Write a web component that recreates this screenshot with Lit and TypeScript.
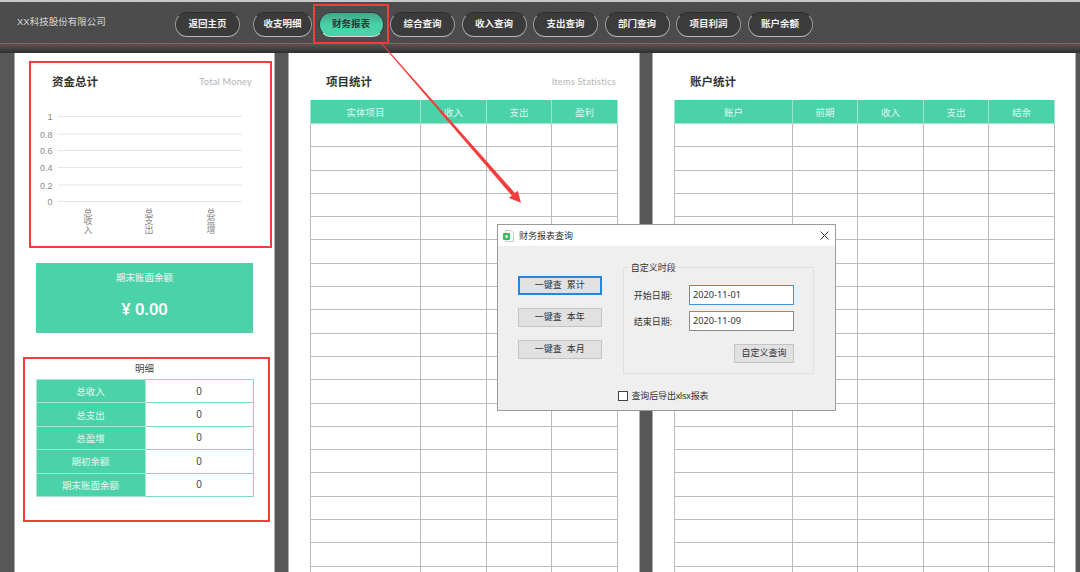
import { LitElement, html, css, svg } from "lit";
import { customElement } from "lit/decorators.js";

const NAV = ["返回主页", "收支明细", "财务报表", "综合查询", "收入查询", "支出查询", "部门查询", "项目利润", "账户余额"];
const DETAIL = ["总收入", "总支出", "总盈增", "期初余额", "期末账面余额"];
const ROWS = Array.from({ length: 20 });

@customElement("app-root")
export class AppRoot extends LitElement {
  static styles = css`
    :host {
      display: block;
      position: relative;
      width: 1080px;
      height: 572px;
      overflow: hidden;
      background: #575757;
      font-family: "Liberation Sans", "Noto Sans CJK SC", sans-serif;
      font-size: 10px;
      color: #333;
    }
    .top {
      box-sizing: border-box;
      height: 44px;
      display: flex;
      align-items: flex-start;
      border-top: 2px solid #c9c9c9;
      border-bottom: 1px solid #3f8f4c;
      background-color: #484848;
      background-image: linear-gradient(45deg, #505050 25%, #434343 25%, #434343 50%, #505050 50%, #505050 75%, #434343 75%);
      background-size: 3px 3px;
    }
    .brand {
      width: 175px;
      box-sizing: border-box;
      padding: 13px 0 0 17px;
      color: #d6d6d6;
      font-size: 9.5px;
      line-height: 14px;
    }
    nav {
      display: flex;
      gap: 6.5px;
      padding-top: 10px;
    }
    .btn {
      box-sizing: border-box;
      width: 65px;
      height: 24.5px;
      border-radius: 12.25px;
      border: 1px solid #2e2e2e;
      border-bottom-color: #b8b8b8;
      border-left-color: #9a9a9a;
      border-right-color: #9a9a9a;
      background: #3b3b3b;
      color: #f0f0f0;
      font-size: 9.5px;
      font-weight: 700;
      line-height: 22.5px;
      text-align: center;
    }
    .btn.first { margin-right: 6.5px; }
    .btn.narrow { width: 59px; }
    .btn.on {
      background: linear-gradient(#3fa888, #4bd2a8 55%);
      border-color: #3a3a3a;
      border-bottom-color: #d8d8d8;
      color: #333;
    }
    .strip {
      height: 9px;
      background: linear-gradient(#565656, #2f2f2f);
    }
    .main {
      display: flex;
      padding-left: 15px;
      height: 519px;
    }
    .panel {
      position: relative;
      box-sizing: border-box;
      background: #fff;
      height: 100%;
      overflow: hidden;
      box-shadow: -1px 0 0 #aaa, 1px 0 0 #b0b0b0;
    }
    .p1 { width: 259px; margin-right: 15px; }
    .p2 { width: 350px; margin-right: 14px; padding: 20px 21px 0; }
    .p3 { width: 422px; padding: 20px 21px 0; }
    .head {
      display: flex;
      justify-content: space-between;
      align-items: center;
      height: 17px;
      margin-bottom: 10px;
    }
    .head b {
      font-size: 11.5px;
      font-weight: 700;
      color: #333;
      padding-left: 16px;
      padding-bottom: 2px;
    }
    .head span {
      font-family: "Lato", "Noto Sans", sans-serif;
      font-size: 9.2px;
      letter-spacing: 0.25px;
      color: #b4b4b4;
      padding-right: 2px;
    }
    .p1 .sec { padding: 20px 22px 0 37px; }
    .p1 .head { margin-bottom: 0; }
    .p1 .head b { padding-left: 0; }
    .p1 .head span { padding-right: 0; }
    .chart { display: block; width: 259px; height: 134px; margin-left: -37px; margin-top: 10px; }
    .chart text { font-size: 9px; fill: #8a8a8a; font-family: "Liberation Sans", "Noto Sans CJK SC", sans-serif; }
    .chart text.cat { font-size: 9px; }
    .card {
      box-sizing: border-box;
      margin: 29px 21px 0;
      height: 70px;
      background: #4bd2a8;
      color: #ecfbf6;
      text-align: center;
      padding-top: 8px;
      font-size: 9.5px;
      line-height: 14px;
    }
    .card strong {
      display: block;
      margin-top: 11px;
      font-family: "Noto Sans", "Noto Sans CJK SC", sans-serif;
      font-size: 16.5px;
      font-weight: 600;
      line-height: 26px;
      color: #fff;
    }
    .dt {
      margin-top: 27px;
      text-align: center;
      font-size: 9.5px;
      line-height: 18px;
      color: #444;
    }
    .detail {
      margin: 1px 21px 0 20.5px;
      width: 218px;
      border-collapse: collapse;
      table-layout: fixed;
    }
    .detail th {
      width: 109px;
      height: 23.4px;
      padding: 0;
      box-sizing: border-box;
      background: #4bd2a8;
      color: #e4f9f1;
      font-weight: 400;
      font-size: 9.5px;
      border: 1px solid #a8e8d2;
    }
    .detail td {
      padding: 0;
      box-sizing: border-box;
      text-align: center;
      font-size: 10px;
      color: #444;
      border: 1px solid #80dcbe;
    }
    .grid {
      border-collapse: collapse;
      table-layout: fixed;
      box-sizing: border-box;
    }
    .grid th {
      height: 23.5px;
      padding: 0;
      box-sizing: border-box;
      background: #4bd2a8;
      color: #dff7ee;
      font-size: 9.5px;
      font-weight: 400;
      border: 1px solid #9ce5cd;
      border-top: none;
    }
    .grid td {
      height: 23.3px;
      padding: 0;
      box-sizing: border-box;
      border: 1px solid #bcbcbc;
    }
    .g2 { width: 307px; }
    .g3 { width: 380px; }
    .note {
      position: absolute;
      box-sizing: border-box;
      border: 2px solid #f43c3c;
      pointer-events: none;
    }
    .n1 { left: 313px; top: 4px; width: 76px; height: 40px; }
    .n2 { left: 29px; top: 61px; width: 243px; height: 187px; }
    .n3 { left: 23px; top: 357px; width: 247px; height: 165px; }
    .arrow { position: absolute; left: 0; top: 0; width: 1080px; height: 572px; pointer-events: none; }
    .dlg {
      position: absolute;
      left: 497px;
      top: 224px;
      box-sizing: border-box;
      width: 339px;
      height: 187px;
      border: 1px solid #9a9a9a;
      background: #efefef;
      color: #333;
      font-size: 9px;
    }
    .bar {
      display: flex;
      align-items: center;
      height: 21px;
      padding: 0 6px 0 5px;
      background: #fff;
      gap: 5px;
    }
    .bar span { flex: 1; }
    .body {
      display: flex;
      padding: 21px 21px 0 20px;
      height: 122px;
      box-sizing: content-box;
    }
    .quick {
      display: flex;
      flex-direction: column;
      gap: 13px;
      width: 84px;
      padding-top: 9px;
      margin-right: 21px;
    }
    .wbtn {
      box-sizing: border-box;
      height: 19px;
      border: 1px solid #c4c4c4;
      background: #e1e1e1;
      text-align: center;
      line-height: 17px;
      color: #333;
    }
    .wbtn.def { border: 2px solid #1e88e5; line-height: 15px; }
    .group {
      position: relative;
      box-sizing: border-box;
      width: 192px;
      height: 107px;
      border: 1px solid #e0e0e0;
      padding: 17px 19px 0 10px;
    }
    .legend {
      position: absolute;
      left: 5px;
      top: -6px;
      padding: 0 2px;
      background: #efefef;
      line-height: 12px;
    }
    .field {
      display: flex;
      align-items: center;
      justify-content: space-between;
      margin-bottom: 6px;
    }
    .input {
      box-sizing: border-box;
      width: 105px;
      height: 20px;
      padding-left: 3px;
      border: 1px solid #8a8a8a;
      background: #fff;
      line-height: 18px;
      font-size: 9.2px;
      font-family: "Noto Sans", "Noto Sans CJK SC", sans-serif;
    }
    .input.focus { border-color: #3c96e0; }
    .custom { width: 60px; margin: 13px 0 0 auto; }
    .check {
      display: flex;
      align-items: center;
      gap: 3.5px;
      padding-left: 120px;
      letter-spacing: -0.15px;
    }
    .box { box-sizing: border-box; width: 10px; height: 10px; border: 1px solid #444; background: #fff; }
  `;

  private navBtn(t: string, i: number) {
    const cls = ["btn", i === 0 ? "first" : "", i === 1 ? "narrow" : "", i === 2 ? "on" : ""].join(" ");
    return html`<div class=${cls}>${t}</div>`;
  }

  private chart() {
    const ys: [string, number][] = [["1", 116.5], ["0.8", 134], ["0.6", 150.5], ["0.4", 167.5], ["0.2", 185], ["0", 201.5]];
    const xs: [string[], number][] = [[["总", "收", "入"], 88], [["总", "支", "出"], 149], [["总", "盈", "增"], 211]];
    return svg`<svg class="chart" viewBox="15 100 259 134">
      ${ys.map(([l, y]) => svg`
        <line x1="58" x2="242" y1=${y} y2=${y} stroke="#e6e6e6" stroke-width="1"></line>
        <text x="52.5" y=${y + 3.5} text-anchor="end">${l}</text>`)}
      ${xs.map(([cs, x]) => svg`<text class="cat" text-anchor="middle">${cs.map((c, i) => svg`<tspan x=${x} y=${215.5 + i * 8.8}>${c}</tspan>`)}</text>`)}
    </svg>`;
  }

  private grid(cls: string, widths: number[], heads: string[]) {
    return html`<table class="grid ${cls}">
      <colgroup>${widths.map((w) => html`<col style="width:${w}px" />`)}</colgroup>
      <thead><tr>${heads.map((h) => html`<th>${h}</th>`)}</tr></thead>
      <tbody>${ROWS.map(() => html`<tr>${heads.map(() => html`<td></td>`)}</tr>`)}</tbody>
    </table>`;
  }

  render() {
    return html`
      <header class="top">
        <div class="brand">XX科技股份有限公司</div>
        <nav>${NAV.map((t, i) => this.navBtn(t, i))}</nav>
      </header>
      <div class="strip"></div>
      <div class="main">
        <section class="panel p1">
          <div class="sec">
            <div class="head"><b>资金总计</b><span>Total Money</span></div>
            ${this.chart()}
          </div>
          <div class="card">期末账面余额<strong>¥ 0.00</strong></div>
          <div class="dt">明细</div>
          <table class="detail">
            ${DETAIL.map((d) => html`<tr><th>${d}</th><td>0</td></tr>`)}
          </table>
        </section>
        <section class="panel p2">
          <div class="head"><b>项目统计</b><span>Items Statistics</span></div>
          ${this.grid("g2", [110, 66, 65, 66], ["实体项目", "收入", "支出", "盈利"])}
        </section>
        <section class="panel p3">
          <div class="head"><b>账户统计</b></div>
          ${this.grid("g3", [118, 65, 66, 65, 66], ["账户", "前期", "收入", "支出", "结余"])}
        </section>
      </div>

      <svg class="arrow" viewBox="0 0 1080 572">
        <polygon points="381.6,44.3 382.4,43.7 514.8,193 517.7,190.7 521,202.7 509,198 511.8,195.6" fill="#f43c3c"></polygon>
      </svg>
      <div class="note n1"></div>
      <div class="note n2"></div>
      <div class="note n3"></div>

      <div class="dlg">
        <div class="bar">
          <svg width="11" height="12" viewBox="0 0 11 12">
            <path d="M2.5 .5H8L10.5 3V11.5H2.5Z" fill="#fff" stroke="#c8c8c8"></path>
            <rect x="0" y="3" width="7" height="7" rx="1" fill="#3fb560"></rect>
            <rect x="2.5" y="5" width="2.2" height="3" fill="#dff5e6"></rect>
          </svg>
          <span>财务报表查询</span>
          <svg width="9" height="9" viewBox="0 0 9 9">
            <path d="M.5 .5L8.5 8.5M8.5 .5L.5 8.5" stroke="#333" stroke-width="1" fill="none"></path>
          </svg>
        </div>
        <div class="body">
          <div class="quick">
            <div class="wbtn def">一键查&nbsp;&nbsp;累计</div>
            <div class="wbtn">一键查&nbsp;&nbsp;本年</div>
            <div class="wbtn">一键查&nbsp;&nbsp;本月</div>
          </div>
          <div class="group">
            <div class="legend">自定义时段</div>
            <div class="field"><span>开始日期:</span><div class="input focus">2020-11-01</div></div>
            <div class="field"><span>结束日期:</span><div class="input">2020-11-09</div></div>
            <div class="wbtn custom">自定义查询</div>
          </div>
        </div>
        <div class="check"><div class="box"></div><span>查询后导出xlsx报表</span></div>
      </div>
    `;
  }
}
